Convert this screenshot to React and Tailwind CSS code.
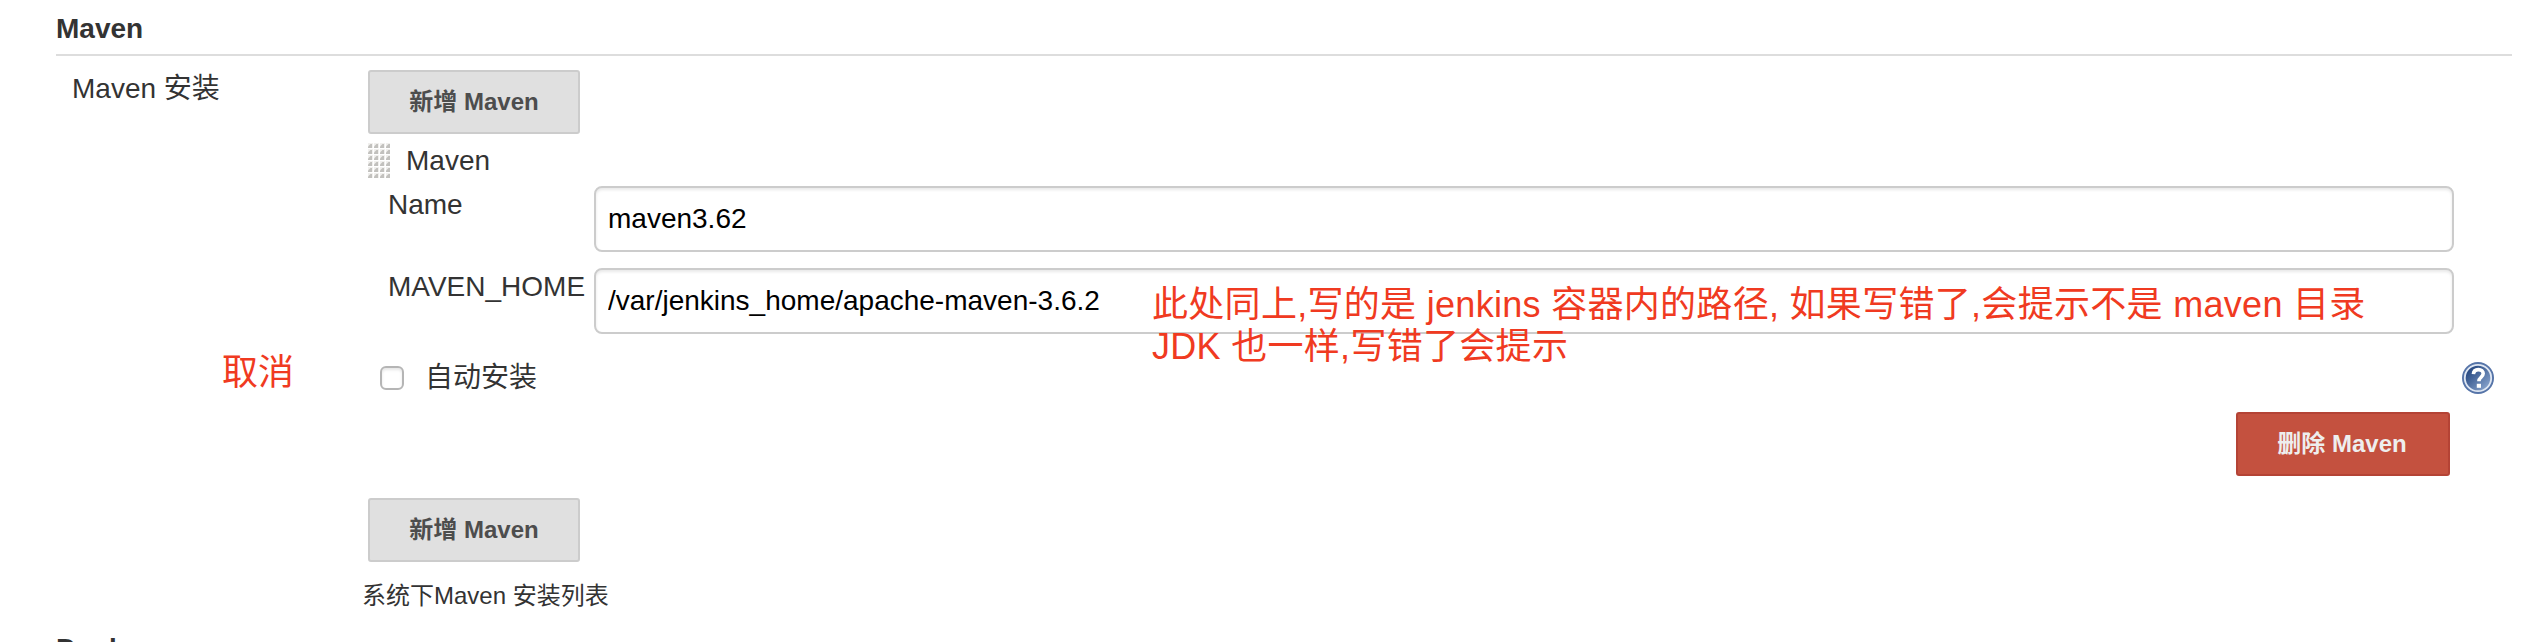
const font = "font-['Liberation_Sans','Noto_Sans_CJK_SC',sans-serif]";

function Grip() {
  const dots = [];
  for (let r = 0; r < 6; r++) for (let c = 0; c < 4; c++) dots.push([c * 6, r * 6 + 2]);
  return (
    <svg width="22" height="38" className="block shrink-0">
      {dots.map(([x, y]) => (
        <g key={x + "-" + y}>
          <rect x={x} y={y - 1} width="5" height="5" fill="#f1f0ee" />
          <path d={`M${x + 4} ${y}v4h-4v-1.500l2.500-2.500z`} fill="#c2c1be" />
        </g>
      ))}
    </svg>
  );
}

function Help() {
  return (
    <svg width="32" height="32" viewBox="0 0 32 32" className="block">
      <defs>
        <linearGradient id="help" x1="0" y1="0" x2="1" y2="1">
          <stop offset="0.15" stopColor="#24467f" />
          <stop offset="0.9" stopColor="#8ba6cf" />
        </linearGradient>
      </defs>
      <circle cx="16" cy="16" r="16" fill="#5674a8" />
      <circle cx="16" cy="16" r="13.2" fill="url(#help)" stroke="#dfe7f3" strokeWidth="1.8" />
      <path d="M11.4 12.2c.2-3 2.300-4.600 5-4.600 2.800 0 4.800 1.600 4.800 4 0 3.600-4.300 3.800-4.300 7.600" fill="none" stroke="#fff" strokeWidth="3.600" />
      <rect x="14.800" y="21.800" width="4.200" height="4" fill="#fff" />
    </svg>
  );
}

function Button({ children, danger }) {
  return (
    <button
      className={
        "flex h-16 items-center justify-center rounded-[3px] border-2 pb-px text-2xl leading-none font-bold " +
        (danger ? "w-[214px] border-[#b44335] bg-[#c4513f] pr-0.5 text-[#eeeeee]" : "w-[212px] border-[#cccccc] bg-[#e0e0e0] text-[#4d4d4d]")
      }
    >
      {children}
    </button>
  );
}

function Field({ label, value }) {
  return (
    <div className="flex h-[82px] pl-5">
      <div className="w-[206px] shrink-0 pt-[3px] leading-8">{label}</div>
      <input
        readOnly
        value={value}
        className="h-[66px] w-[1860px] rounded-lg border-2 border-[#cccccc] bg-white px-3 text-[28px] text-black shadow-[inset_0_2px_3px_rgba(0,0,0,0.09)] outline-none"
      />
    </div>
  );
}

export default function App() {
  return (
    <div className={"relative h-[642px] w-[2542px] overflow-hidden bg-white text-[28px] text-[#333333] " + font}>
      <div className="ml-14 w-[2456px]">
        <h2 className="h-14 border-b-2 border-[#dddddd] pt-[13px] leading-8 font-bold">Maven</h2>
        <div className="flex h-[570px]">
          <div className="w-[312px] shrink-0 pt-[17px] pl-4 leading-8">Maven 安装</div>
          <div className="w-[2144px] pt-3.5">
            <Button>新增 Maven</Button>
            <div className="flex h-[50px] gap-4 pt-2">
              <Grip />
              <span className="pt-[3px] leading-8">Maven</span>
            </div>
            <div className="h-0.5" />
            <Field label="Name" value="maven3.62" />
            <Field label="MAVEN_HOME" value="/var/jenkins_home/apache-maven-3.6.2" />
            <div className="flex h-[62px] items-start pt-3 pr-[18px]">
              <span className="mt-1 ml-3 h-6 w-6 rounded-md border-2 border-[#b5b5b5] bg-white shadow-[inset_0_2px_3px_rgba(0,0,0,0.1)]" />
              <span className="ml-[21px] leading-8">自动安装</span>
              <span className="ml-auto"><Help /></span>
            </div>
            <div className="flex h-[86px] pl-[1868px]">
              <Button danger>删除 Maven</Button>
            </div>
            <Button>新增 Maven</Button>
            <div className="-ml-1.5 pt-[18px] text-2xl leading-8">系统下Maven 安装列表</div>
          </div>
        </div>
        <h2 className="pt-[7px] leading-8 font-bold">Docker</h2>
      </div>
      <div className="absolute top-[284px] left-[1152px] text-[36px] leading-[42px] tracking-[0.3px] whitespace-pre text-[#f03a21]">
        {"此处同上,写的是 jenkins 容器内的路径, 如果写错了,会提示不是 maven 目录\nJDK 也一样,写错了会提示"}
      </div>
      <div className="absolute top-[352px] left-[222px] text-[36px] leading-[42px] text-[#f03a21]">取消</div>
    </div>
  );
}
